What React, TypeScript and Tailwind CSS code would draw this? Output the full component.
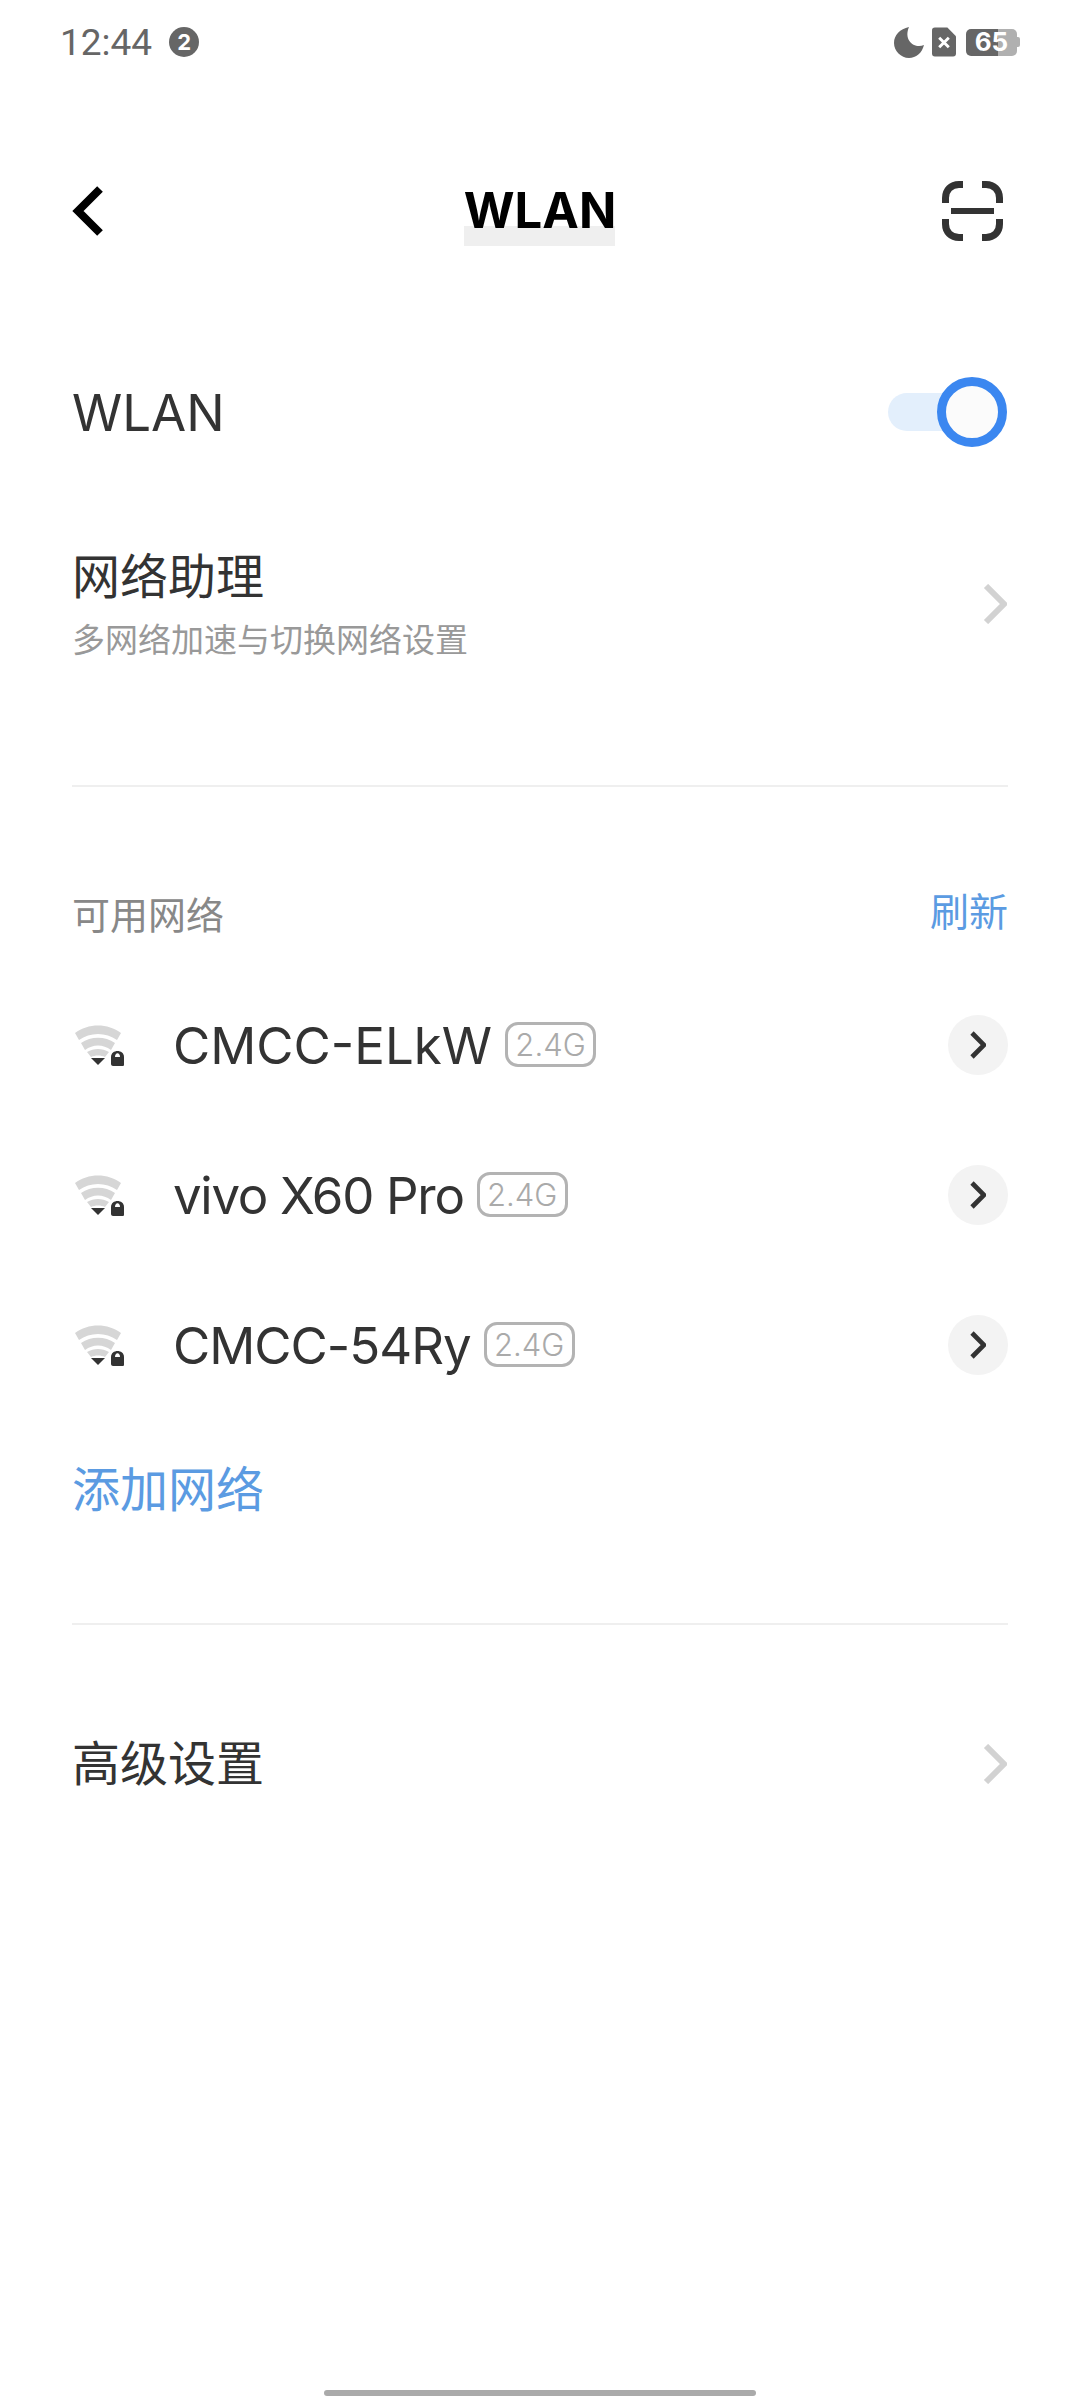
const sans = "font-['Inter','Noto_Sans_CJK_SC',sans-serif]";

const Chevron = ({ className = "", weight = 5 }: { className?: string; weight?: number }) => (
  <svg viewBox="0 0 24 40" className={className} fill="none" stroke="currentColor" strokeWidth={weight}>
    <path d="M3 2 L21 20 L3 38" />
  </svg>
);

const Wifi = () => (
  <svg width="50" height="42" viewBox="0 0 50 42" className="shrink-0">
    <path d="M0 9 C13 -1 33 -1 46 9 L42 16 C31 8 15 8 4 16 Z" fill="#d6d6d6" />
    <path d="M6 19 C16 12 30 12 40 19 L36 26 C28 20 18 20 10 26 Z" fill="#d6d6d6" />
    <path d="M12 28 C19 24 27 24 34 28 L30 33 C26 31 20 31 16 33 Z" fill="#d6d6d6" />
    <path d="M16 34 L30 34 L23 41 Z" fill="#333" />
    <path d="M38 42 C37 42 36 41 36 40 L36 33 C36 25 49 25 49 33 L49 40 C49 41 49 42 48 42 Z" fill="#333" />
    <path d="M40 33 C40 28 45 28 45 33" fill="#fff" />
  </svg>
);

const networks = [
  { name: "CMCC-ELkW", tracking: "tracking-[0px]" },
  { name: "vivo X60 Pro", tracking: "tracking-[-1.3px]" },
  { name: "CMCC-54Ry", tracking: "tracking-[-1px]" },
];

const App = () => {
  return (
    <div className={`w-[1080px] h-[2400px] bg-white flex flex-col relative overflow-hidden ${sans}`}>
      {/* status bar */}
      <div className="h-[84px] flex items-center justify-between pl-[60px] pr-[60px]">
        <div className="flex items-center gap-[17px]">
          <span className="text-[37px] leading-none text-[#666] font-['Roboto',sans-serif]">12:44</span>
          <span className="w-[30px] h-[30px] rounded-full bg-[#666] text-white text-[22px] font-bold flex items-center justify-center">2</span>
        </div>
        <div className="flex items-center gap-[9px]">
          <svg width="31" height="31" viewBox="0 0 31 31" className="-mr-[2px]">
            <path d="M15 0 C6 2 0 8 0 16 C0 24 7 31 15 31 C22 31 28 26 30 18 C21 22 9 14 15 0 Z" fill="#666" />
          </svg>
          <svg width="24" height="30" viewBox="0 0 25 30">
            <path d="M3 0 L16 0 L25 9 L25 27 C25 29 24 30 22 30 L3 30 C1 30 0 29 0 27 L0 3 C0 1 1 0 3 0 Z" fill="#666" />
            <path d="M7.500 10.500 L17.500 20.500 M17.500 10.500 L7.500 20.500" stroke="#fff" strokeWidth="3" />
          </svg>
          <div className="flex items-center ml-[1px]">
            <div className="w-[51px] h-[27px] rounded-[5px] flex items-center justify-center text-white text-[26px] font-bold leading-none bg-[linear-gradient(90deg,#666_0,#666_62%,#b0b0b0_62%,#b0b0b0_100%)]">65</div>
            <div className="w-[3px] h-[10px] bg-[#b0b0b0] rounded-r-[2px]" />
          </div>
        </div>
      </div>

      {/* header */}
      <div className="mt-[52px] h-[150px] flex items-center justify-between pl-[72px] pr-[77px] relative">
        <svg width="32" height="50" viewBox="0 0 32 50" fill="none" stroke="#000" strokeWidth="8">
          <path d="M28 3 L6 25 L28 47" />
        </svg>
        <div className="absolute left-[464px] top-[90px] w-[151px] h-[20px] bg-[#efefef]" />
        <span className="absolute left-[440px] w-[200px] text-center text-[49px] font-bold text-black">WLAN</span>
        <svg width="61" height="60" viewBox="0 0 61 60" fill="none" stroke="#333" strokeWidth="7">
          <path d="M21 3.500 L17 3.500 C9 3.500 3.500 9 3.500 17 L3.500 22" />
          <path d="M40 3.500 L44 3.500 C52 3.500 57.500 9 57.500 17 L57.500 22" />
          <path d="M21 56.500 L17 56.500 C9 56.500 3.500 51 3.500 43 L3.500 38" />
          <path d="M40 56.500 L44 56.500 C52 56.500 57.500 51 57.500 43 L57.500 38" />
          <path d="M9 30 L52 30" strokeWidth="6" />
        </svg>
      </div>

      {/* WLAN toggle */}
      <div className="mt-[91px] h-[70px] flex items-center justify-between pl-[72px] pr-[73px]">
        <span className="text-[51px] leading-none text-[#333]">WLAN</span>
        <div className="flex items-center">
          <div className="w-[59px] h-[38px] rounded-l-full bg-[#e3effc]" />
          <div className="w-[70px] h-[70px] rounded-full border-[9px] border-[#3b87f0] bg-[#fbfbfb] -ml-[10px]" />
        </div>
      </div>

      {/* assistant */}
      <div className="mt-[98px] flex items-center justify-between pl-[72px] pr-[73px]">
        <div className="flex flex-col">
          <span className="text-[48px] leading-[64px] text-[#333]">网络助理</span>
          <span className="text-[33px] leading-[44px] mt-[9px] text-[#999]">多网络加速与切换网络设置</span>
        </div>
        <Chevron weight={6} className="w-[24px] h-[40px] text-[#d2d2d2]" />
      </div>

      <div className="mt-[123px] mx-[72px] h-[2px] bg-[#efefef]" />

      {/* available */}
      <div className="mt-[103px] flex items-center justify-between pl-[72px] pr-[72px]">
        <span className="text-[38px] leading-[50px] text-[#888]">可用网络</span>
        <span className="text-[39px] leading-[50px] text-[#5b9be2] -mt-[6px]">刷新</span>
      </div>

      <div className="mt-[30px] flex flex-col">
        {networks.map((network) => (
          <div key={network.name} className="h-[150px] flex items-center pl-[75px] pr-[72px]">
            <Wifi />
            <span className={`ml-[48px] text-[51px] leading-none text-[#333] ${network.tracking}`}>{network.name}</span>
            <span className="ml-[13px] w-[91px] h-[45px] rounded-[13px] border-[3px] border-[#b3b3b3] text-[#aaa] text-[31px] font-light leading-none flex items-center justify-center -mt-[2px]">2.4G</span>
            <div className="ml-auto w-[60px] h-[60px] rounded-full bg-[#f3f3f3] flex items-center justify-center text-[#333]">
              <Chevron weight={7} className="w-[16px] h-[28px]" />
            </div>
          </div>
        ))}
      </div>

      <div className="mt-[38px] pl-[72px] text-[48px] leading-[64px] text-[#5b9be2]">添加网络</div>

      <div className="mt-[101px] mx-[72px] h-[2px] bg-[#efefef]" />

      <div className="mt-[107px] flex items-center justify-between pl-[72px] pr-[73px]">
        <span className="text-[48px] leading-[64px] text-[#333]">高级设置</span>
        <Chevron weight={6} className="w-[24px] h-[40px] text-[#d2d2d2]" />
      </div>

      {/* home bar */}
      <div className="absolute left-[324px] bottom-[4px] w-[432px] h-[6px] rounded-full bg-[#aaa]" />
    </div>
  );
};

export default App;
